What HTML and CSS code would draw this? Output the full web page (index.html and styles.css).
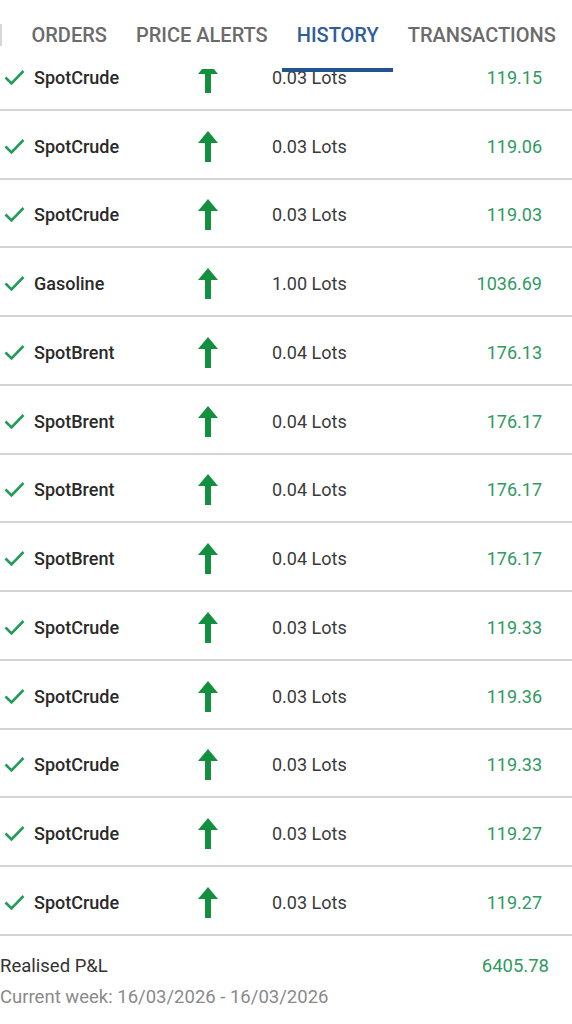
FILE: index.html
```html
<!DOCTYPE html>
<html lang="en">
<head>
    <meta charset="UTF-8">
    <meta name="viewport" content="width=device-width, initial-scale=1.0">
    <title>History</title>
    <link rel="stylesheet" href="styles.css">
</head>
<body>
    <div class="tabs">
        <span class="tab-edge"></span>
        <div class="tab">ORDERS</div>
        <div class="tab">PRICE ALERTS</div>
        <div class="tab active">HISTORY</div>
        <div class="tab">TRANSACTIONS</div>
    </div>

    <div class="list-wrap">
        <div class="list" id="list"></div>
    </div>

    <div class="summary">
        <div class="summary-row">
            <span class="summary-label">Realised P&amp;L</span>
            <span class="summary-value">6405.78</span>
        </div>
        <div class="summary-week">Current week: 16/03/2026 - 16/03/2026</div>
    </div>

    <script>
        // 历史成交
        var trades = [
            ['SpotCrude', '0.03', '119.15'],
            ['SpotCrude', '0.03', '119.06'],
            ['SpotCrude', '0.03', '119.03'],
            ['Gasoline', '1.00', '1036.69'],
            ['SpotBrent', '0.04', '176.13'],
            ['SpotBrent', '0.04', '176.17'],
            ['SpotBrent', '0.04', '176.17'],
            ['SpotBrent', '0.04', '176.17'],
            ['SpotCrude', '0.03', '119.33'],
            ['SpotCrude', '0.03', '119.36'],
            ['SpotCrude', '0.03', '119.33'],
            ['SpotCrude', '0.03', '119.27'],
            ['SpotCrude', '0.03', '119.27']
        ];

        var checkSvg = '<svg width="21" height="17" viewBox="0 0 21 17"><path d="M1.5 8.5 L7.5 14.5 L19.5 2" fill="none" stroke="#239b5a" stroke-width="2.6"/></svg>';
        var arrowSvg = '<svg width="20" height="31" viewBox="0 0 20 31"><path d="M10 0 L20 12 L13 12 L13 31 L7 31 L7 12 L0 12 Z" fill="#13903f"/></svg>';

        var html = '';
        trades.forEach(function(t) {
            html += '<div class="row">' +
                '<span class="check">' + checkSvg + '</span>' +
                '<span class="name">' + t[0] + '</span>' +
                '<span class="arrow">' + arrowSvg + '</span>' +
                '<span class="lots">' + t[1] + ' Lots</span>' +
                '<span class="price">' + t[2] + '</span>' +
                '</div>';
        });
        document.getElementById('list').innerHTML = html;
    </script>
</body>
</html>
```

FILE: styles.css
```css
* {
    margin: 0;
    padding: 0;
    box-sizing: border-box;
}

body {
    font-family: Roboto, 'Noto Sans', Arial, sans-serif;
    background: #fff;
    width: 572px;
    height: 1024px;
    overflow: hidden;
}

/* 顶部标签 */
.tabs {
    position: relative;
    z-index: 2;
    display: flex;
    height: 69px;
    padding-left: 17px;
    background: #fff;
    white-space: nowrap;
}

.tab-edge {
    position: absolute;
    left: 0;
    top: 24px;
    width: 2px;
    height: 22px;
    background: #d6d6d6;
}

.tab {
    position: relative;
    padding: 23px 14.5px 0;
    font-size: 20px;
    font-weight: 500;
    color: #6b6b6b;
}

.tab.active {
    color: #2f5d9c;
}

.tab.active::after {
    content: '';
    position: absolute;
    left: 0;
    right: 0;
    bottom: -3px;
    height: 4px;
    background: #23548f;
}

/* 列表 */
.list-wrap {
    overflow: hidden;
}

.list {
    margin-top: -27px;
}

.row {
    display: flex;
    align-items: center;
    height: 68.75px;
    padding-top: 4px;
    border-bottom: 2px solid #d4d4d4;
    font-size: 18px;
}

.check {
    width: 34px;
    padding-left: 4px;
    display: flex;
    align-items: center;
}

.name {
    width: 164px;
    font-weight: 500;
    color: #2a2a2a;
}

.arrow {
    width: 74px;
    display: flex;
    align-items: center;
}

.lots {
    flex: 1;
    color: #3a3a3a;
}

.price {
    padding-right: 30px;
    color: #2f9a62;
}

/* 汇总 */
.summary {
    padding-top: 19px;
}

.summary-row {
    display: flex;
    justify-content: space-between;
    padding-right: 23px;
    font-size: 18.5px;
}

.summary-label {
    color: #333;
}

.summary-value {
    color: #2f9a62;
}

.summary-week {
    margin-top: 9px;
    font-size: 18.5px;
    color: #8a8a8a;
}
```
